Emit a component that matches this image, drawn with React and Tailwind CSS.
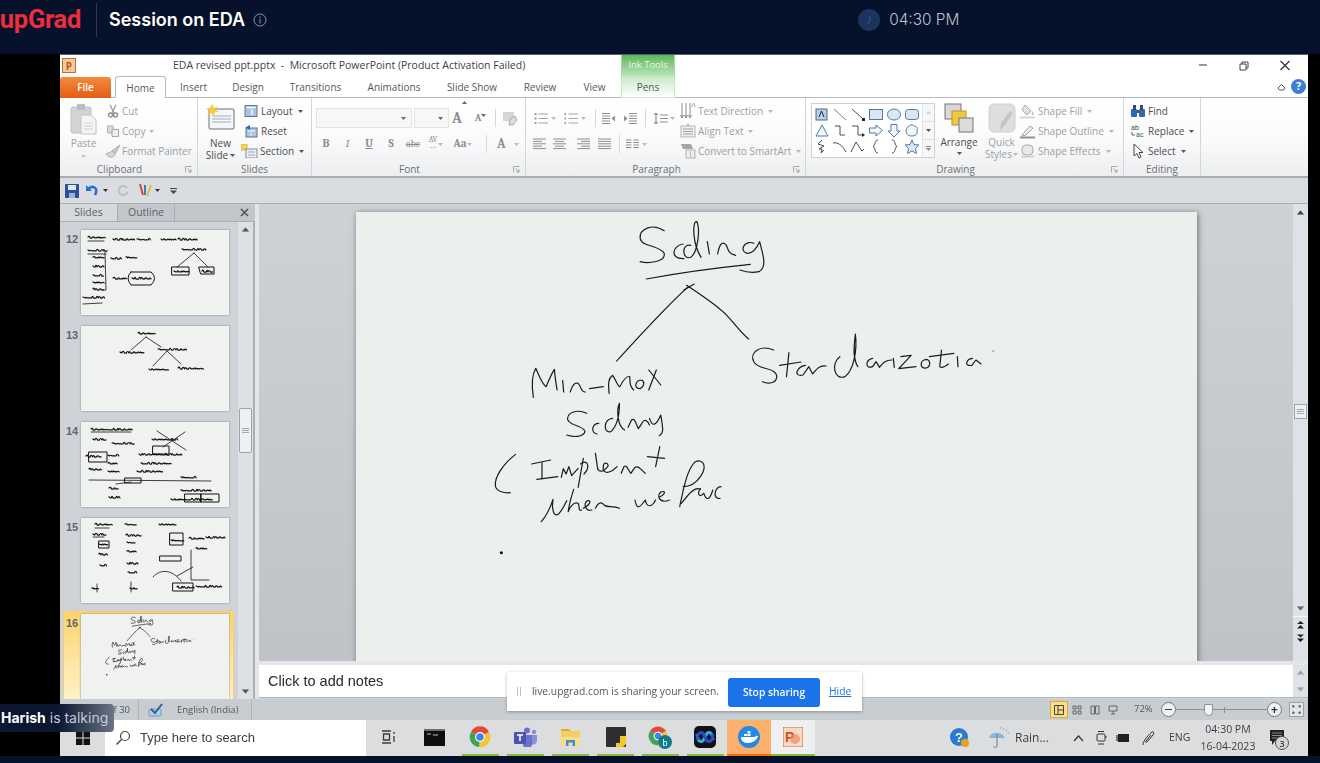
import React from 'react'

const ui = { fontFamily: '"Open Sans", "Liberation Sans", sans-serif' }

const inkStrokes = [
  // Scaling
  'M535 62 C500 38 462 58 465 85 C470 112 522 105 535 130 C540 155 490 162 465 155',
  'M590 102 C560 105 548 148 592 146',
  'M612 106 C582 100 588 152 612 142 C632 128 640 60 630 35 C616 30 616 100 642 142',
  'M660 95 L666 132',
  'M690 132 C695 105 702 92 714 104 C722 116 716 128 742 136',
  'M795 100 C770 88 750 122 775 130 C795 132 808 104 812 95 C820 130 836 170 810 185 C790 190 770 186 755 180',
  // underline and tree
  'M483 207 C570 190 700 172 785 163',
  'M605 230 C540 290 470 370 397 453',
  'M592 240 L622 222',
  'M600 226 C650 260 700 296 720 320 C745 348 760 370 780 387',
  // Standardization
  'M853 420 C810 402 782 430 795 455 C810 482 860 470 862 500 C860 522 835 522 820 515',
  'M897 428 L890 500',
  'M870 466 L932 456',
  'M945 466 C920 470 908 502 938 495 L955 470 L966 492 C975 480 985 465 1005 468',
  'M1045 440 C1018 460 1028 512 1060 500 C1085 480 1096 420 1090 372 C1084 420 1084 450 1097 470',
  'M1140 445 C1118 450 1118 478 1140 470 L1150 455 L1160 472 C1168 462 1175 450 1196 450',
  'M1200 445 L1203 472',
  'M1222 440 L1252 436 L1216 476 L1266 470',
  'M1296 448 C1276 450 1276 478 1296 474 C1310 468 1308 450 1296 448',
  'M1340 420 L1335 470 C1340 475 1350 470 1360 462',
  'M1305 440 L1376 430',
  'M1386 440 L1388 470',
  'M1430 445 C1410 448 1406 470 1428 466 L1440 450 L1455 462',
  // Min-Max
  'M155 562 C150 530 148 500 162 475 C172 500 182 525 192 530 C200 510 208 490 216 478 C218 500 220 520 224 540',
  'M240 512 L243 546',
  'M262 546 C268 526 275 516 285 520 C296 530 290 546 306 546',
  'M318 536 L358 530',
  'M375 550 C372 520 372 506 385 496 C395 510 400 530 406 530 C416 510 425 496 435 500 C435 520 436 530 446 540',
  'M470 510 C450 510 445 536 465 536 C478 528 478 516 470 510',
  'M490 480 L525 525',
  'M512 480 L490 540',
  // Scaling (second line)
  'M310 610 C280 595 250 610 255 630 C265 650 300 645 305 665 C300 682 270 682 252 675',
  'M345 640 C325 640 320 670 340 672',
  'M385 625 C360 625 355 670 380 665 C396 650 405 620 405 580 C395 600 400 650 420 660',
  'M430 652 L440 630 C450 620 455 650 460 656 L470 640 C480 620 490 640 492 645',
  'M492 625 C500 650 510 650 525 615 C530 650 536 670 520 677',
  // ( Implement
  'M103 733 C70 760 40 800 45 830 C50 845 70 850 88 848',
  'M150 762 L205 750',
  'M180 758 L180 806',
  'M165 808 L226 800',
  'M236 802 L242 776 L250 792 L258 770 L266 797 L285 775',
  'M300 745 L285 832',
  'M292 762 C312 745 322 770 302 792',
  'M335 730 L342 778 C350 790 365 780 372 768 C372 755 355 755 358 778 C362 795 385 785 398 770',
  'M410 790 L418 770 C425 762 430 780 438 790 L450 772 C460 765 468 780 480 790',
  'M522 710 L510 770',
  'M486 740 L536 745',
  // when we have
  'M178 935 C195 915 205 890 212 868 C208 890 212 925 228 912 C240 900 248 880 252 872',
  'M272 838 C265 860 258 890 256 905 C264 885 275 875 285 880 C290 890 285 905 295 900',
  'M300 895 C320 885 325 870 312 872 C300 880 305 905 325 900',
  'M335 895 C345 875 355 875 360 885 C370 895 385 885 405 895',
  'M450 870 C455 902 465 892 480 870 C485 896 500 890 510 870',
  'M520 862 C540 852 540 840 525 846 C510 860 525 882 550 870',
  'M580 890 C590 840 600 780 625 755 C650 745 660 770 640 800 C620 830 600 830 590 830',
  'M585 880 C600 860 622 828 640 838',
  'M640 836 C630 850 636 866 650 850 C656 870 666 875 676 840',
  'M700 830 C680 830 675 870 697 865'
]

const Ink = ({ width, height, stroke = 3.5 }) => (
  <svg width={width} height={height} viewBox="0 0 1568 1050" preserveAspectRatio="none" className="block shrink-0">
    <g fill="none" stroke="#1a1c1c" strokeWidth={stroke} strokeLinecap="round" strokeLinejoin="round">
      {inkStrokes.map((d, i) => <path key={i} d={d} />)}
    </g>
    <circle cx="62" cy="1028" r={stroke + 1} fill="#111" />
    <circle cx="1490" cy="423" r={stroke * 0.6} fill="#555" />
  </svg>
)

// handwriting seen at thumbnail size, a soft cursive loop
const wobble = [-1.3, 0.7, -0.5, 1, -1.7, 0.4, -0.9, 1.1, -0.3, 0.6, -1.5, 0.8, -0.6]
const steps = [2.2, 1.7, 2.8, 1.9, 2.4, 1.6, 2.5]
const scribble = (x, y, w, seed = 1) => {
  let d = `M${x} ${y}`
  for (let i = 0, px = x; px < x + w; i++) {
    const step = steps[(i + seed) % steps.length]
    const top = y + wobble[(i * 3 + seed) % wobble.length] * 1.3
    d += ` Q${(px + step * 0.5).toFixed(1)} ${top.toFixed(1)} ${(px + step).toFixed(1)} ${(y + 0.9).toFixed(1)}`
    px += step
  }
  return d
}

const thumbData = {
  12: {
    scribbles: [[7, 7, 16], [32, 9, 20], [56, 9, 12], [80, 9, 14], [97, 9, 18], [7, 20, 18], [12, 27, 10], [12, 36, 10], [12, 45, 10], [12, 52, 10], [12, 59, 10], [30, 28, 9], [45, 27, 10], [32, 48, 12], [51, 48, 19], [101, 19, 23], [93, 41, 14], [121, 41, 10], [2, 67, 20]],
    lines: ['M7 11 L23 11', 'M2 74 L21 73', 'M24 22 L25 60 L22 60', 'M113 23 L96 37', 'M113 23 L127 37', 'M7 24 L25 24'],
    shapes: ['M50 42 H70 Q77 48 70 55 H50 Q44 48 50 42 Z', 'M91 37 H108 V45 H91 Z', 'M118 37 H133 V44 H120 Z']
  },
  13: {
    scribbles: [[57, 7, 16], [39, 26, 22], [77, 23, 28], [68, 43, 18], [97, 42, 24]],
    lines: ['M65 11 L50 24', 'M65 11 L80 21', 'M86 25 L72 40', 'M86 25 L100 38']
  },
  14: {
    scribbles: [[10, 7, 40], [12, 17, 12], [31, 21, 20], [71, 17, 25], [5, 34, 15], [27, 33, 9], [27, 41, 9], [58, 32, 42], [60, 41, 30], [27, 49, 9], [8, 47, 12], [56, 49, 25], [100, 55, 14], [28, 66, 9], [28, 75, 9], [100, 68, 30], [90, 77, 40]],
    lines: ['M8 58 L130 59', 'M76 9 L105 28', 'M82 25 L104 10', 'M10 10 L50 10', 'M35 62 L50 60'],
    shapes: ['M8 30 H26 V40 H8 Z', 'M72 24 H88 V32 H72 Z', 'M104 72 H120 V80 H104 Z', 'M120 72 H138 V80 H120 Z', 'M44 56 H60 V61 H44 Z']
  },
  15: {
    scribbles: [[14, 6, 16], [12, 16, 12], [44, 6, 10], [78, 6, 16], [45, 17, 14], [46, 24, 8], [46, 33, 8], [46, 45, 9], [47, 54, 8], [18, 26, 8], [18, 36, 7], [19, 47, 5], [90, 22, 12], [108, 20, 14], [125, 19, 18], [11, 70, 6], [49, 70, 6], [96, 69, 16], [115, 68, 24], [115, 30, 10]],
    lines: ['M110 32 V62 L128 62', 'M72 59 C80 50 92 52 100 63', 'M14 10 H28', 'M12 19 H23', 'M96 58 L112 49', 'M16 74 V66', 'M50 74 V64'],
    shapes: ['M18 23 H28 V30 H18 Z', 'M89 15 H102 V27 H89 Z', 'M79 38 H100 V43 H79 Z', 'M92 65 H112 V73 H92 Z']
  }
}

const Thumb = ({ n }) => {
  const t = thumbData[n]
  return (
    <div className="w-[148px] h-[85px] bg-[#eff2ef] shrink-0 shadow-[0_0_2px_#7f8488] overflow-hidden">
      {n === 16 ? (
        <div className="ml-[22px]">
          <Ink width={95} height={62} stroke={11} />
        </div>
      ) : (
        <svg width="148" height="85" className="block blur-[0.3px]">
          <g fill="none" stroke="#111" strokeLinejoin="round" strokeLinecap="round">
            {t.scribbles.map(([x, y, w], i) => <path key={i} d={scribble(x, y, w, i)} strokeWidth="1.2" />)}
            {t.lines.map((d, i) => <path key={i} d={d} strokeWidth="0.8" />)}
            {(t.shapes || []).map((d, i) => <path key={i} d={d} strokeWidth="1" />)}
          </g>
        </svg>
      )}
    </div>
  )
}

const Caret = ({ className = 'text-[#9a9c9e]' }) => (
  <svg width="5" height="3" viewBox="0 0 5 3" className={`shrink-0 ${className}`}>
    <path d="M0 0H5L2.5 3Z" fill="currentColor" />
  </svg>
)

const Launcher = () => (
  <svg width="7" height="7" viewBox="0 0 7 7" className="shrink-0">
    <path d="M.5 6.5V.5H6.5" fill="none" stroke="#a9abad" />
    <path d="M2.5 2.5L6 6M6 3.5V6H3.5" fill="none" stroke="#9a9c9e" />
  </svg>
)

const Ico = ({ w = 14, h = 14, children, className = '' }) => (
  <svg width={w} height={h} viewBox={`0 0 ${w} ${h}`} className={`shrink-0 ${className}`} fill="none">
    {children}
  </svg>
)

const ribbonIcons = {
  cut: <Ico><path d="M4 1L8 9M10 1L6 9" stroke="#9b9b9b" strokeWidth="1.3" /><circle cx="4.5" cy="11" r="2" stroke="#8e8e8e" strokeWidth="1.3" /><circle cx="9.5" cy="11" r="2" stroke="#8e8e8e" strokeWidth="1.3" /></Ico>,
  copy: <Ico><path d="M1.5 2H7V9H1.5Z" fill="#dcdcdc" stroke="#b0b0b0" /><path d="M6 5.5H12.5V12.5H6Z" fill="#eee" stroke="#a8a8a8" /></Ico>,
  painter: <Ico w={16}><path d="M15 1L7 7L10 10Z" fill="#c8c8c8" stroke="#aaa" /><path d="M7 7C5 9 3 9 1 10C3 13 7 14 9 12C10 11 10 10 10 10Z" fill="#d8d8d8" stroke="#aaa" /></Ico>,
  layout: <Ico><rect x="1" y="1.5" width="12" height="11" fill="#a9c4de" stroke="#58799a" /><path d="M2.5 3.5H11.5M8 5.5V11" stroke="#fff" strokeWidth="1.4" /></Ico>,
  reset: <Ico><rect x="2" y="4" width="11" height="9" fill="#a9c4de" stroke="#58799a" /><path d="M4 7H11M7 9V12" stroke="#fff" /><path d="M6 1L1.5 3.5L6 6Z" fill="#1f6fbf" /></Ico>,
  section: <Ico w={18}><rect x="0" y="0" width="6" height="6" fill="#f4cf63" stroke="#e5b53a" /><rect x="5" y="5" width="11" height="9" fill="#eef1f5" stroke="#778da3" /><path d="M7 8H14M7 11H14" stroke="#8da6bf" /></Ico>,
  direction: <Ico w={16} h={18}><path d="M2 1V15M6 1V15M10 1V15" stroke="#8b8b8b" /><path d="M.5 13L2 16L3.5 13M4.5 13L6 16L7.500 13M8.500 13L10 16L11.500 13" stroke="#8b8b8b" /><path d="M11.500 5L13.500 1L15.500 5" stroke="#aaa" /></Ico>,
  align: <Ico w={16} h={16}><rect x="1" y="3" width="14" height="11" fill="#eee" stroke="#b5b5b5" /><path d="M3 6H13M3 8.500H13M3 11H13" stroke="#a5a5a5" /><path d="M8 .5V3" stroke="#888" /></Ico>,
  smart: <Ico w={16} h={16}><path d="M1 1H11L13 6H3Z" fill="#a5a5a5" /><rect x="6" y="7" width="9" height="8" fill="#eee" stroke="#b0b0b0" /><path d="M10.500 8V14" stroke="#bbb" /></Ico>,
  fill: <Ico w={16} h={16}><path d="M5 2L11 8L7 12L2 7Z" fill="#e1e1e1" stroke="#aaa" /><path d="M12 8C14 10 14 12 12.500 12C11.500 12 11.500 10 12 8Z" fill="#bbb" /><path d="M0 14.500H15" stroke="#d5d5d5" strokeWidth="2" /></Ico>,
  outline: <Ico w={16} h={16}><path d="M3 11L10 3L13 5L6 12L2 13Z" fill="#eee" stroke="#a0a0a0" /><path d="M0 14.500H15" stroke="#909090" strokeWidth="2" /></Ico>,
  effects: <Ico w={16} h={16}><rect x="2" y="2" width="11" height="10" rx="4" fill="#e8e8e8" stroke="#aaa" /><path d="M2 13.500H14" stroke="#d0d0d0" strokeWidth="2" /></Ico>,
  find: <Ico w={16} h={14}><rect x="1" y="5" width="6" height="8" rx="1" fill="#2d6cb5" /><rect x="9" y="5" width="6" height="8" rx="1" fill="#2d6cb5" /><rect x="3" y="1" width="3" height="5" fill="#3a4a60" /><rect x="10" y="1" width="3" height="5" fill="#3a4a60" /><path d="M7 6H9V9H7Z" fill="#555" /></Ico>,
  replace: <Ico w={16} h={14}><text x="1" y="6" fontSize="7" fill="#444" fontFamily="Liberation Sans">ab</text><text x="6" y="13" fontSize="7" fill="#2a6a2a" fontFamily="Liberation Sans">ac</text><path d="M2 8V11H5" stroke="#3070b0" /></Ico>,
  select: <Ico w={14} h={16}><path d="M3 1V13L6 10.500L8 15L10 14L8 9.500H12Z" fill="#fff" stroke="#444" /></Ico>
}

const SmallRow = ({ icon, label, caret, dark, gap = 'gap-[2px]', iconBox = 'w-[16px]' }) => (
  <div className={`h-[20px] shrink-0 flex items-center ${gap} text-[10px] ${dark ? 'text-[#4b4d50]' : 'text-[#9c9ea0]'}`}>
    <span className={`${iconBox} flex justify-center shrink-0`}>{ribbonIcons[icon]}</span>
    <span className="whitespace-nowrap">{label}</span>
    {caret && <span className="ml-[3px]"><Caret className={dark ? 'text-[#555]' : 'text-[#b4b6b8]'} /></span>}
  </div>
)

const Group = ({ width, label, launcher, children }) => (
  <div className={`${width} h-full flex flex-col border-r border-[#d4d7da] shrink-0`}>
    <div className="flex-1 flex min-h-0">{children}</div>
    <div className={`h-[15px] shrink-0 pt-[2px] flex items-center relative justify-center text-[10px] text-[#6d7073] ${launcher ? 'pr-[18px]' : ''}`}>
      {label}
      {launcher && <span className="absolute right-[5px] top-[5px]"><Launcher /></span>}
    </div>
  </div>
)

const FontBtn = ({ w, children, className = '' }) => (
  <div className={`${w} flex items-center justify-center shrink-0 text-[#8a8c8e] ${className}`}>{children}</div>
)

const VLine = ({ className = '' }) => <div className={`w-px h-[18px] bg-[#d6d8da] shrink-0 ${className}`} />

const ParaLines = ({ kind }) => {
  const lines = {
    left: [[0, 13], [0, 9], [0, 13], [0, 9], [0, 13]],
    center: [[0, 13], [2, 9], [0, 13], [2, 9], [0, 13]],
    right: [[0, 13], [4, 9], [0, 13], [4, 9], [0, 13]],
    just: [[0, 13], [0, 13], [0, 13], [0, 13], [0, 13]]
  }[kind]
  return (
    <Ico w={13} h={12}>
      {lines.map(([x, w], i) => <path key={i} d={`M${x} ${i * 2.4 + 1}h${w}`} stroke="#8e8e8e" />)}
    </Ico>
  )
}

const ListIcon = ({ numbered }) => (
  <Ico w={14} h={13}>
    {[2, 6.5, 11].map((y) => (
      <g key={y}>
        <rect x="0.500" y={y - 1} width={numbered ? 1.5 : 2} height="2" fill="#9a9a9a" />
        <path d={`M4.500 ${y}H14`} stroke="#a5a5a5" />
      </g>
    ))}
  </Ico>
)

const IndentIcon = ({ flip }) => (
  <Ico w={15} h={13}>
    <g transform={flip ? 'matrix(-1 0 0 1 15 0)' : undefined}>
      <path d="M6 1.500H14M6 4H14M6 6.500H14M6 9H14M6 11.500H14" stroke="#8f8f8f" />
      <path d="M4.500 6.500L1 3.500V9.500Z" fill="#8f8f8f" />
    </g>
  </Ico>
)

const shapeIcons = [
  <g><rect x="2" y="2" width="11" height="11" fill="#b8cfe4" stroke="#4b6a89" /><path d="M5 10L7.500 4L10 10" stroke="#223" /></g>,
  <path d="M2 2L14 13" stroke="#6d7d8d" />,
  <g><path d="M2 2L13 12" stroke="#3f4f5f" /><rect x="12" y="11" width="3" height="3" fill="#223" /></g>,
  <rect x="1.500" y="2.500" width="13" height="10" fill="#dbe7f3" stroke="#4f7aa5" />,
  <ellipse cx="8" cy="7.500" rx="6.500" ry="5.500" fill="#dbe7f3" stroke="#4f7aa5" />,
  <rect x="1.500" y="2.500" width="13" height="10" rx="3" fill="#dbe7f3" stroke="#4f7aa5" />,
  <path d="M8 2L14 13H2Z" fill="#f3f7fb" stroke="#4f7aa5" />,
  <path d="M3 3H8V12H13" stroke="#3f4f5f" />,
  <g><path d="M2 3H8V12H13" stroke="#3f4f5f" /><path d="M12 10L15 12L12 14Z" fill="#223" /></g>,
  <path d="M1.500 5H8V2L14.500 7.500L8 13V10H1.500Z" fill="#f3f7fb" stroke="#4f7aa5" />,
  <path d="M5 1.500H11V8H14L8 14L2 8H5Z" fill="#f3f7fb" stroke="#4f7aa5" />,
  <path d="M5 3C7 1 9 2 10 3C13 3 14 6 13 8C14 11 11 13 8 13C4 13 2 11 2 8C2 6 3 4 5 3Z" fill="#f3f7fb" stroke="#4f7aa5" />,
  <path d="M8 1L4 5L10 7L5 10L8 10L7 14L10 11" stroke="#3f4f5f" />,
  <path d="M1 4C6 3 10 6 14 13" stroke="#3f4f5f" />,
  <path d="M1 13L6 3L12 12L14 10" stroke="#3f4f5f" />,
  <path d="M10 1C6 1 8 6 5 7.500C8 9 6 14 10 14" stroke="#3f4f5f" />,
  <path d="M6 1C10 1 8 6 11 7.500C8 9 10 14 6 14" stroke="#3f4f5f" />,
  <path d="M8 1L10 5.500L15 6L11.500 9.500L12.500 14.500L8 12L3.500 14.500L4.500 9.500L1 6L6 5.500Z" fill="#dbe7f3" stroke="#4f7aa5" />
]

const Ribbon = () => (
  <div className="h-[80px] flex bg-linear-to-b from-white via-[#fbfbfc] to-[#eceef0] border-b-2 border-[#a8adb1]">
    <Group width="w-[138px]" label="Clipboard" launcher>
      <div className="w-[45px] flex flex-col items-center pt-[5px] pl-[2px] text-[10px] text-[#9c9ea0]">
        <svg width="27" height="32" viewBox="0 0 27 32" fill="none">
          <rect x="1" y="4" width="20" height="26" rx="2" fill="#d3d3d3" stroke="#c2c2c2" />
          <rect x="7" y="1" width="8" height="6" fill="#bdbdbd" />
          <path d="M11 12H21L26 17V31H11Z" fill="#f4f4f4" stroke="#c4c4c4" />
          <path d="M14 20H23M14 23H23M14 26H23" stroke="#d0d0d0" />
        </svg>
        <span className="mt-[1px]">Paste</span>
        <span className="mt-[4px]"><Caret className="text-[#c2c2c2]" /></span>
      </div>
      <div className="flex flex-col pt-[3px]">
        <SmallRow icon="cut" label="Cut" gap="gap-[1px]" />
        <SmallRow icon="copy" label="Copy" caret gap="gap-[1px]" />
        <SmallRow icon="painter" label="Format Painter" gap="gap-[1px]" />
      </div>
    </Group>
    <Group width="w-[114px]" label="Slides">
      <div className="w-[45px] flex flex-col items-center pt-[5px] text-[10px] leading-[12px] text-[#4b4d50]">
        <svg width="29" height="29" viewBox="0 0 29 29" fill="none">
          <rect x="3" y="6" width="25" height="20" rx="1" fill="#f4f6f9" stroke="#66717d" />
          <path d="M6 13H25M6 16H25M6 19H25" stroke="#bcc5cf" strokeWidth="1.500" />
          <path d="M6 1L8 5L12 3L9 7L13 9L8.500 9.500L8 13L5.500 10L1 12L3.500 8L0 5L4 5Z" fill="#f4c838" />
        </svg>
        <span className="mt-[5px]">New</span>
        <span className="flex items-center gap-[2px]">Slide <Caret className="text-[#555]" /></span>
      </div>
      <div className="flex flex-col pt-[3px]">
        <SmallRow icon="layout" label="Layout" caret dark />
        <SmallRow icon="reset" label="Reset" dark />
        <SmallRow icon="section" label="Section" caret dark iconBox="w-[16px] -ml-[1px]" />
      </div>
    </Group>
    <Group width="w-[214px]" label="Font" launcher>
      <div className="flex flex-col pl-[4px] pt-[10px]">
        <div className="flex items-center h-[20px]">
          <div className="w-[96px] h-[20px] bg-[#f6f7f8] border border-[#e2e4e6] flex items-center justify-end pr-[5px]"><Caret className="text-[#666]" /></div>
          <div className="ml-[2px] w-[35px] h-[20px] bg-[#f6f7f8] border border-[#e2e4e6] flex items-center justify-end pr-[5px]"><Caret className="text-[#666]" /></div>
          <FontBtn w="w-[21px]" className="font-bold text-[15px] font-serif items-start">A<span className="rotate-180 -mt-[6px]"><Caret className="text-[#666]" /></span></FontBtn>
          <FontBtn w="w-[21px]" className="font-bold text-[10px] font-serif">A<span className="-mt-[6px]"><Caret className="text-[#666]" /></span></FontBtn>
          <VLine className="ml-[4px]" />
          <FontBtn w="w-[28px]">
            <Ico w={16} h={15}><rect x="1" y="1" width="11" height="9" fill="#d5d5d5" /><path d="M8 8L13 5L15 9L11 14H7Z" fill="#ddd" stroke="#aaa" /></Ico>
          </FontBtn>
        </div>
        <div className="flex items-center h-[20px] mt-[6px] -ml-[1px] text-[10px] font-serif">
          <FontBtn w="w-[22px]" className="font-bold text-[11px]">B</FontBtn>
          <FontBtn w="w-[21px]" className="italic text-[11px]">I</FontBtn>
          <FontBtn w="w-[22px]" className="underline text-[11px] font-bold">U</FontBtn>
          <FontBtn w="w-[22px]" className="font-bold text-[11px]">S</FontBtn>
          <FontBtn w="w-[22px]" className="line-through">abc</FontBtn>
          <FontBtn w="w-[24px]" className="gap-[1px] leading-[8px] text-[8px]"><span className="flex flex-col items-center">AV<span className="text-[7px]">↔</span></span><Caret className="text-[#bbb]" /></FontBtn>
          <FontBtn w="w-[30px]" className="gap-[1px] text-[11px] font-bold">Aa<Caret className="text-[#bbb]" /></FontBtn>
          <VLine className="ml-[8px]" />
          <FontBtn w="w-[33px]" className="gap-[8px] text-[13px] font-bold justify-start! pl-[10px]">A<Caret className="text-[#bbb]" /></FontBtn>
        </div>
      </div>
    </Group>
    <Group width="w-[280px]" label="Paragraph" launcher>
      <div className="flex flex-col pl-[4px] pt-[10px] w-[149px] shrink-0">
        <div className="flex items-center h-[20px]">
          <FontBtn w="w-[30px]" className="gap-[3px]"><ListIcon /><Caret className="text-[#bbb]" /></FontBtn>
          <FontBtn w="w-[30px]" className="gap-[3px]"><ListIcon numbered /><Caret className="text-[#bbb]" /></FontBtn>
          <VLine className="ml-[5px]" />
          <FontBtn w="w-[24px]"><IndentIcon flip /></FontBtn>
          <FontBtn w="w-[20px]"><IndentIcon /></FontBtn>
          <VLine className="ml-[5px]" />
          <FontBtn w="w-[36px]" className="gap-[2px]">
            <Ico w={15} h={13}><path d="M3 1V12M1 3L3 1L5 3M1 10L3 12L5 10" stroke="#7b7b7b" /><path d="M7 3H15M7 6.500H15M7 10H15" stroke="#8f8f8f" /></Ico>
            <Caret className="text-[#bbb]" />
          </FontBtn>
        </div>
        <div className="flex items-center h-[20px] mt-[6px]">
          <FontBtn w="w-[19px]"><ParaLines kind="left" /></FontBtn>
          <FontBtn w="w-[21px]"><ParaLines kind="center" /></FontBtn>
          <FontBtn w="w-[26px]"><ParaLines kind="right" /></FontBtn>
          <FontBtn w="w-[17px]"><ParaLines kind="just" /></FontBtn>
          <VLine className="ml-[6px]" />
          <FontBtn w="w-[26px]" className="gap-[3px] ml-[3px]">
            <Ico w={13} h={12}><path d="M0 2H5.500M0 4.500H5.500M0 7H5.500M0 9.500H5.500M7.500 2H13M7.500 4.500H13M7.500 7H13M7.500 9.500H13" stroke="#8e8e8e" /></Ico>
            <Caret className="text-[#bbb]" />
          </FontBtn>
        </div>
      </div>
      <div className="flex flex-col pt-[3px] pl-[5px]">
        <SmallRow icon="direction" label="Text Direction" caret />
        <SmallRow icon="align" label="Align Text" caret />
        <SmallRow icon="smart" label="Convert to SmartArt" caret />
      </div>
    </Group>
    <Group width="w-[318px]" label="Drawing" launcher>
      <div className="ml-[5px] mt-[5px] w-[124px] h-[55px] border border-[#cfd2d5] bg-white flex shrink-0">
        <div className="w-[110px] grid grid-cols-6 place-items-center content-between py-[3px] px-[1px]">
          {shapeIcons.map((shape, i) => (
            <svg key={i} width="16" height="15" viewBox="0 0 16 15" fill="none">{shape}</svg>
          ))}
        </div>
        <div className="flex-1 flex flex-col border-l border-[#e2e4e6] bg-[#f6f7f8]">
          <div className="flex-1 flex items-center justify-center rotate-180"><Caret className="text-[#d0d0d0]" /></div>
          <div className="flex-1 flex items-center justify-center border-y border-[#dfe1e3]"><Caret className="text-[#555]" /></div>
          <div className="flex-1 flex flex-col gap-[1px] items-center justify-center"><span className="w-[5px] h-px bg-[#888]" /><Caret className="text-[#888]" /></div>
        </div>
      </div>
      <div className="w-[48px] flex flex-col items-center pt-[5px] text-[10px] leading-[12px] text-[#4b4d50] shrink-0">
        <svg width="30" height="30" viewBox="0 0 30 30" fill="none">
          <rect x="1" y="1" width="16" height="15" fill="#d9d9d9" stroke="#777" />
          <rect x="8" y="8" width="14" height="14" fill="#f2c93d" stroke="#b7932b" />
          <rect x="15" y="15" width="14" height="14" fill="#dcdcdc" stroke="#777" />
        </svg>
        <span className="mt-[3px]">Arrange</span>
        <span className="mt-[4px]"><Caret className="text-[#555]" /></span>
      </div>
      <div className="w-[37px] flex flex-col items-center pt-[5px] text-[10px] leading-[12px] text-[#9c9ea0] shrink-0">
        <svg width="28" height="30" viewBox="0 0 28 30" fill="none">
          <rect x="1" y="1" width="26" height="28" rx="5" fill="#dedede" stroke="#d0d0d0" />
          <path d="M25 10L17 22L12 27L13 20L22 8Z" fill="#c4c4c4" />
        </svg>
        <span className="mt-[3px]">Quick</span>
        <span className="flex items-center gap-[1px] whitespace-nowrap">Styles <Caret className="text-[#bbb]" /></span>
      </div>
      <div className="flex flex-col pt-[3px]">
        <SmallRow icon="fill" label="Shape Fill" caret />
        <SmallRow icon="outline" label="Shape Outline" caret />
        <SmallRow icon="effects" label="Shape Effects" caret />
      </div>
    </Group>
    <Group width="w-[77px]" label="Editing">
      <div className="flex flex-col pt-[3px] pl-[6px]">
        <SmallRow icon="find" label="Find" dark />
        <SmallRow icon="replace" label="Replace" caret dark />
        <SmallRow icon="select" label="Select" caret dark />
      </div>
    </Group>
    <div className="flex-1" />
  </div>
)

const TitleBar = () => (
  <div className="h-[22px] flex bg-white border-t border-[#5a5f63]">
    <div className="w-[561px] flex items-center">
      <div className="ml-[2px] w-[14px] h-[15px] bg-[#f5c9a0] border border-[#c9692d] flex items-center justify-center text-[10px] font-bold text-[#c4501b] leading-none">P</div>
      <span className="ml-[97px] text-[10.5px] text-[#3d3f42] whitespace-pre">EDA revised ppt.pptx  -  Microsoft PowerPoint (Product Activation Failed)</span>
    </div>
    <div className="w-[54px] bg-linear-to-b from-[#57b957] to-[#b9e4b9] flex items-center justify-center text-[9.5px] text-[#e8f6e8] border-x border-[#a6d8a6]">Ink Tools</div>
    <div className="flex-1 flex justify-end pr-[3px]">
      {[
        <path d="M3 6H11" stroke="#555" strokeWidth="1.2" />,
        <path d="M3 5H9V11H3ZM5 5V3H11V9H9" stroke="#444" />,
        <path d="M2.500 2L11.500 11M11.500 2L2.500 11" stroke="#333" strokeWidth="1.2" />
      ].map((p, i) => (
        <div key={i} className="w-[41px] flex items-center justify-center">
          <svg width="14" height="14" viewBox="0 0 14 14" fill="none">{p}</svg>
        </div>
      ))}
    </div>
  </div>
)

const tabs = [
  ['Insert', 'w-[55px]'],
  ['Design', 'w-[54px]'],
  ['Transitions', 'w-[81px]'],
  ['Animations', 'w-[76px]'],
  ['Slide Show', 'w-[80px]'],
  ['Review', 'w-[56px]'],
  ['View', 'w-[53px]']
]

const TabRow = () => (
  <div className="h-[22px] flex bg-white text-[10px] text-[#55585b]">
    <div className="w-[51px] mt-[1px] bg-linear-to-b from-[#f58a3c] to-[#e25c12] rounded-t-[3px] flex items-center justify-center text-white font-semibold">File</div>
    <div className="w-[4px] border-b border-[#b5bac0]" />
    <div className="w-[51px] h-[22px] pt-[2px] bg-white border border-b-0 border-[#b5bac0] rounded-t-[3px] flex items-center justify-center">Home</div>
    {tabs.map(([label, w]) => (
      <div key={label} className={`${w} pt-[2px] flex items-center justify-center border-b border-[#b5bac0]`}>{label}</div>
    ))}
    <div className="w-[54px] pt-[2px] bg-linear-to-b from-[#c4e8c4] to-white border-x border-b border-[#cfe5cf] flex items-center justify-center">Pens</div>
    <div className="flex-1 flex items-center justify-end gap-[5px] pr-[2px] border-b border-[#b5bac0]">
      <svg width="9" height="8" viewBox="0 0 9 8" fill="none"><path d="M1 5L4.500 1.500L8 5L6.500 7H2.500Z" stroke="#555" /></svg>
      <div className="w-[15px] h-[15px] rounded-full bg-[#3d7fd0] text-white text-[11px] font-bold flex items-center justify-center">?</div>
    </div>
  </div>
)

const Qat = () => (
  <div className="h-[26px] bg-[#d9dde1] flex items-center pl-[5px] border-b border-[#a8adb1]">
    <svg width="14" height="14" viewBox="0 0 14 14" className="shrink-0"><rect width="14" height="14" rx="1" fill="#2b4f9a" /><rect x="3" y="1" width="8" height="5" fill="#dfe7f3" /><rect x="4" y="9" width="6" height="5" fill="#9db3d6" /></svg>
    <svg width="14" height="13" viewBox="0 0 14 13" fill="none" className="ml-[7px] shrink-0"><path d="M2 5C6 1 13 3 9 11" stroke="#2a6fd0" strokeWidth="2.500" /><path d="M0 1V7H6Z" fill="#2a6fd0" /></svg>
    <span className="ml-[3px]"><Caret className="text-[#333]" /></span>
    <svg width="12" height="12" viewBox="0 0 12 12" fill="none" className="ml-[9px] shrink-0"><path d="M10 3A4.500 4.500 0 1 0 10.500 7" stroke="#bdbfc1" strokeWidth="2" /></svg>
    <svg width="15" height="15" viewBox="0 0 15 15" fill="none" className="ml-[9px] shrink-0"><path d="M2 1L5 12" stroke="#d04a3a" strokeWidth="2" /><path d="M7 2V12" stroke="#3f7fc0" strokeWidth="2" /><path d="M13 2L9 13" stroke="#e5b93a" strokeWidth="2" /></svg>
    <span className="ml-[2px]"><Caret className="text-[#333]" /></span>
    <svg width="7" height="6" viewBox="0 0 7 6" className="ml-[10px] shrink-0"><path d="M0 0H7V1H0ZM0 2.500H7L3.500 6Z" fill="#444" /></svg>
  </div>
)

const ScrollThumb = ({ className }) => (
  <div className={`border border-[#9ea2a6] bg-[#eef0f3] flex items-center justify-center ${className}`}>
    <div className="w-[7px] flex flex-col gap-[1px]">
      <span className="h-px bg-[#a5a8ab]" />
      <span className="h-px bg-[#a5a8ab]" />
      <span className="h-px bg-[#a5a8ab]" />
    </div>
  </div>
)

const SlidesPanel = () => (
  <div className="w-[195px] flex flex-col shrink-0">
    <div className="h-[18px] flex bg-[#c2c7cb] text-[10.5px] text-[#5e6266] border-b border-[#a9aeb2]">
      <div className="w-[57px] bg-[#d5d9dc] flex items-center justify-center">Slides</div>
      <div className="w-[58px] flex items-center justify-center border-x border-[#a9aeb2]">Outline</div>
      <div className="flex-1 flex items-center justify-end pr-[6px]">
        <svg width="9" height="9" viewBox="0 0 9 9"><path d="M1 1L8 8M8 1L1 8" stroke="#555" strokeWidth="1.600" /></svg>
      </div>
    </div>
    <div className="flex-1 flex min-h-0 bg-[#cfd3d7]">
      <div className="w-[178px] pt-[5px] flex flex-col gap-[5px] overflow-hidden">
        {[12, 13, 14, 15, 16].map((n) => (
          <div
            key={n}
            className={`ml-[3px] w-[171px] h-[91px] shrink-0 flex py-[2px] pl-[3px] text-[11px] font-bold text-[#5c6871] border ${n === 16 ? 'bg-linear-to-b from-[#fdd46a] to-[#fff2c8] border-[#f2cf7d]' : 'border-transparent'}`}
          >
            <span className="w-[15px] pt-[2px] leading-[14px] -ml-[1px]" style={{ fontFamily: '"Liberation Sans", sans-serif' }}>{n}</span>
            <Thumb n={n} />
          </div>
        ))}
      </div>
      <div className="w-[17px] bg-[#dde0e5] border-r-[2px] border-[#aab0b5] flex flex-col items-center pt-[6px]">
        <span className="rotate-180"><Caret className="text-[#555] scale-150" /></span>
        <ScrollThumb className="w-[13px] h-[45px] mt-[177px] rounded-[2px]" />
        <span className="mt-[237px]"><Caret className="text-[#555] scale-150" /></span>
      </div>
    </div>
  </div>
)

const SlideArea = () => (
  <div className="h-[457px] flex">
    <div className="w-[1034px] bg-linear-to-b from-[#ced2d6] to-[#bfc3c7] pt-[8px] pl-[97px] overflow-hidden">
      <div className="w-[841px] h-[460px] bg-[#ecf0ec] shadow-[1px_1px_6px_#666c70]">
        <div className="pl-[124px] -translate-y-[2px]">
          <Ink width={540} height={350} />
        </div>
      </div>
    </div>
    <div className="w-[15px] bg-[#dee1e7] flex flex-col items-center pt-[7px]">
      <span className="rotate-180"><Caret className="text-[#444] scale-150" /></span>
      <ScrollThumb className="w-[13px] h-[15px] mt-[190px]" />
      <span className="mt-[188px]"><Caret className="text-[#666] scale-150" /></span>
      <div className="mt-[6px] w-full border-t border-[#f4f5f7] flex flex-col items-center gap-[3px] pt-[4px]">
        <svg width="7" height="8" viewBox="0 0 7 8"><path d="M3.500 0L7 3H0ZM3.500 4L7 7.500H0Z" fill="#222" /></svg>
        <svg width="7" height="8" viewBox="0 0 7 8" className="mt-[2px]"><path d="M0 .5H7L3.500 3.500ZM0 4.500H7L3.500 8Z" fill="#222" /></svg>
      </div>
    </div>
  </div>
)

const Notes = () => (
  <div className="h-[33px] flex bg-white border-b border-[#b2b7bb]">
    <div className="flex-1 flex items-center pl-[9px] pt-[1px] text-[14.5px] text-[#26282a]" style={{ fontFamily: '"Liberation Sans", sans-serif' }}>Click to add notes</div>
    <div className="w-[15px] bg-[#dee1e7] flex flex-col items-center justify-between py-[6px]">
      <span className="rotate-180"><Caret className="text-[#9ea2a6] scale-150" /></span>
      <Caret className="text-[#9ea2a6] scale-150" />
    </div>
  </div>
)

const StatusBar = () => (
  <div className="h-[21px] bg-[#c8cdd2] flex items-center text-[9.500px] text-[#54585c]">
    <div className="w-[79px] pr-[8px] border-r border-[#aeb3b7] h-full flex items-center justify-end pt-[1px]">Slide 16 of 30</div>
    <div className="w-[33px] flex justify-center">
      <svg width="16" height="14" viewBox="0 0 16 14" fill="none"><rect x="1" y="6" width="12" height="7" rx="1" fill="#b8cce4" stroke="#7d98b8" /><path d="M3 6L7 10L14 1" stroke="#2a62a8" strokeWidth="2" /></svg>
    </div>
    <span className="ml-[5px] w-[74px] pt-[1px] whitespace-nowrap">English (India)</span>
    <div className="w-px h-full bg-[#aeb3b7]" />
    <div className="flex-1" />
    <div className="flex items-center h-full">
      <div className="w-[18px] h-[17px] bg-[#fbdc87] border border-[#d8a93e] flex items-center justify-center">
        <svg width="10" height="10" viewBox="0 0 10 10" fill="none"><path d="M.5.5H9.500V9.500H.5ZM4 .5V9.500M4 5H9.500" stroke="#444" /></svg>
      </div>
      {[
        <path d="M1 1H4V4H1ZM6 1H9V4H6ZM1 6H4V9H1ZM6 6H9V9H6Z" stroke="#666" />,
        <path d="M1 1H4.500V9H1ZM5.500 1H9V9H5.500Z" stroke="#666" />,
        <path d="M1 1H9V6H1ZM5 6V9M3 9H7" stroke="#666" />
      ].map((p, i) => (
        <div key={i} className="w-[18px] flex justify-center">
          <svg width="10" height="10" viewBox="0 0 10 10" fill="none">{p}</svg>
        </div>
      ))}
      <span className="ml-[12px] w-[24px]">72%</span>
      <div className="ml-[3px] w-[15px] h-[15px] rounded-full border border-[#777] bg-[#eef0f2] flex items-center justify-center"><span className="w-[7px] h-[1.500px] bg-[#444]" /></div>
      <div className="w-[91px] h-[11px] relative flex items-center">
        <div className="w-full h-px bg-[#8d9195]" />
        <div className="absolute left-[28px] top-0 w-[9px] h-[12px] bg-[#f3f4f5] border border-[#8d9195] rounded-b-[5px]" />
        <div className="absolute left-[48px] top-[3px] w-px h-[6px] bg-[#8d9195]" />
      </div>
      <div className="w-[15px] h-[15px] rounded-full border border-[#777] bg-[#eef0f2] flex items-center justify-center text-[12px] leading-none text-[#333] font-bold">+</div>
      <div className="ml-[7px] mr-[4px] w-[15px] h-[15px] bg-[#e3e6e9] border border-[#9ea2a6] flex items-center justify-center">
        <svg width="11" height="11" viewBox="0 0 11 11"><path d="M1 1L4 2L2 4ZM10 1L7 2L9 4ZM1 10L4 9L2 7ZM10 10L7 9L9 7Z" fill="#444" /></svg>
      </div>
    </div>
  </div>
)

const appIcons = [
  {
    width: 'w-[45px]',
    icon: <svg width="15" height="14" viewBox="0 0 15 14" fill="none"><path d="M1 1H10M1 13H10M2.500 4H8.500V10H2.500ZM13 2V4M13 6V12" stroke="#3b3b3b" strokeWidth="1.300" /></svg>
  },
  {
    width: 'w-[46px]',
    icon: <svg width="21" height="17" viewBox="0 0 21 17"><rect width="21" height="17" fill="#0e0e0e" /><rect width="21" height="2" fill="#6d6d6d" /><path d="M3 5H7M9 6H14" stroke="#bbb" /></svg>
  },
  {
    bar: 'w-[37px] bg-[#8cb83c]',
    width: 'w-[46px]',
    icon: (
      <svg width="22" height="22" viewBox="0 0 22 22">
        <path d="M11 11L2 6A10 10 0 0 1 20 6Z" fill="#e14a3c" />
        <path d="M11 11L20 6A10 10 0 0 1 10 21Z" fill="#f6c430" />
        <path d="M11 11L10 21A10 10 0 0 1 2 6Z" fill="#3da64f" />
        <circle cx="11" cy="11" r="5" fill="#fff" />
        <circle cx="11" cy="11" r="3.800" fill="#3f86ea" />
      </svg>
    )
  },
  {
    bar: 'w-[37px] bg-[#8cb83c]',
    width: 'w-[45px]',
    icon: (
      <svg width="23" height="20" viewBox="0 0 23 20">
        <circle cx="13" cy="3.500" r="3" fill="#6d72c8" />
        <circle cx="20" cy="5" r="2.300" fill="#8a8edb" />
        <path d="M15 8H23V14A4 4 0 0 1 17 17Z" fill="#8a8edb" />
        <path d="M7 8H18V16A4 4 0 0 1 9 18Z" fill="#6d72c8" />
        <rect y="5" width="12" height="12" rx="1" fill="#4b52b2" />
        <path d="M3 8H9M6 8V14" stroke="#fff" strokeWidth="1.600" />
      </svg>
    )
  },
  {
    bar: 'w-[37px] bg-[#8cb83c]',
    width: 'w-[45px]',
    icon: (
      <svg width="19" height="18" viewBox="0 0 19 18">
        <path d="M0 1H8L10 3H0Z" fill="#e2a92e" />
        <rect y="3" width="19" height="15" fill="#f6cd62" />
        <rect y="9" width="19" height="9" fill="#f9dd86" />
        <path d="M5 18V12H14V18H11.500V14.500H7.500V18Z" fill="#3f8fd0" />
      </svg>
    )
  },
  {
    bar: 'w-[37px] bg-[#8cb83c]',
    width: 'w-[45px]',
    icon: (
      <svg width="20" height="20" viewBox="0 0 20 20">
        <rect width="20" height="20" rx="1" fill="#2e2e2e" />
        <path d="M20 9V17L17 20H10V16L14 16L14 9Z" fill="#f4c927" />
      </svg>
    )
  },
  {
    bar: 'w-[37px] bg-[#8cb83c]',
    width: 'w-[45px]',
    icon: (
      <svg width="25" height="23" viewBox="0 0 25 23">
        <path d="M10 10L2 5A9.500 9.500 0 0 1 18 5Z" fill="#e14a3c" />
        <path d="M10 10L18 5A9.500 9.500 0 0 1 10 19.500Z" fill="#f6c430" />
        <path d="M10 10L10 19.500A9.500 9.500 0 0 1 2 5Z" fill="#3da64f" />
        <circle cx="10" cy="10" r="4" fill="#3f86ea" stroke="#fff" />
        <circle cx="17" cy="16" r="7" fill="#117a8b" />
        <text x="14.500" y="20" fontSize="9" fill="#fff" fontFamily="Liberation Sans">b</text>
      </svg>
    )
  },
  {
    bar: 'w-[37px] bg-[#8cb83c]',
    width: 'w-[44px]',
    icon: (
      <svg width="22" height="22" viewBox="0 0 22 22" fill="none">
        <rect width="22" height="22" rx="5" fill="#111" />
        <path d="M3 8C4 18 9 17 11 11C13 5 18 4 19 14" stroke="#3aa8e8" strokeWidth="3" />
        <path d="M3 14C4 4 9 5 11 11C13 17 18 18 19 8" stroke="#2350c8" strokeWidth="3" />
      </svg>
    )
  },
  {
    bar: 'w-full bg-[#ff6a00]',
    width: 'w-[44px]',
    bg: 'bg-[#fbb06b]',
    icon: (
      <svg width="22" height="22" viewBox="0 0 22 22">
        <circle cx="11" cy="11" r="11" fill="#2388e6" />
        <path d="M3 11H17C18 9 19 10 20 10C19 14 15 17 10 17C6 17 3 15 3 11Z" fill="#fff" />
        <path d="M6 8H9V10H6ZM9.500 8H12.500V10H9.500ZM9.500 5H12.500V7.500H9.500Z" fill="#fff" />
      </svg>
    )
  },
  {
    bar: 'w-full bg-[#8cb83c]',
    width: 'w-[44px]',
    bg: 'bg-[#eeeff0]',
    icon: (
      <svg width="20" height="20" viewBox="0 0 20 20">
        <rect width="20" height="20" fill="#f7d9c6" stroke="#c9692d" />
        <text x="2" y="15" fontSize="14" fontWeight="700" fill="#d2521e" fontFamily="Liberation Sans">P</text>
        <path d="M12 7A5 5 0 1 1 12 17A5 5 0 0 1 12 7Z" fill="#eb8a5e" opacity="0.700" />
      </svg>
    )
  }
]

const Taskbar = () => (
  <div className="h-[36px] flex bg-[#dcdddf] shrink-0">
    <div className="w-[45px] flex items-center justify-center">
      <svg width="14" height="14" viewBox="0 0 14 14"><path d="M0 0H6.500V6.500H0ZM7.500 0H14V6.500H7.500ZM0 7.500H6.500V14H0ZM7.500 7.500H14V14H7.500Z" fill="#111" /></svg>
    </div>
    <div className="w-[261px] bg-white flex items-center pl-[10px] text-[13px] text-[#3c3e40]" style={{ fontFamily: '"Liberation Sans", sans-serif' }}>
      <svg width="16" height="16" viewBox="0 0 16 16" fill="none"><circle cx="10" cy="6" r="4.500" stroke="#444" strokeWidth="1.200" /><path d="M6.500 9.500L1.500 14.500" stroke="#444" strokeWidth="1.400" /></svg>
      <span className="ml-[9px]">Type here to search</span>
    </div>
    {appIcons.map((app, i) => (
      <div key={i} className={`${app.width} h-full flex flex-col items-center shrink-0 ${app.bg || ''}`}>
        <div className="flex-1 flex items-center justify-center">{app.icon}</div>
        <div className={`h-[2px] ${app.bar || 'w-full'}`} />
      </div>
    ))}
    <div className="flex-1 flex items-center text-[#3c3e40]">
      <svg width="20" height="20" viewBox="0 0 20 20" className="ml-[135px] shrink-0">
        <circle cx="9" cy="9" r="9" fill="#2a7ad2" />
        <text x="5" y="14" fontSize="13" fontWeight="700" fill="#fff" fontFamily="Liberation Sans">?</text>
        <circle cx="15" cy="15" r="4" fill="#e8a020" />
      </svg>
      <svg width="22" height="24" viewBox="0 0 22 24" fill="none" className="ml-[18px] shrink-0">
        <path d="M1 12C3 5 14 5 17 12Z" fill="#86b8de" />
        <path d="M9 8V20C9 22 6 22 6 20" stroke="#777" />
        <path d="M16 2L15 4M19 3L18 5M21 6L20 8M13 1L12.500 3" stroke="#8db4d6" />
      </svg>
      <span className="ml-[5px] text-[12px] w-[36px] whitespace-nowrap">Rain...</span>
      <svg width="11" height="7" viewBox="0 0 11 7" fill="none" className="ml-[22px] shrink-0"><path d="M1 6L5.500 1L10 6" stroke="#333" strokeWidth="1.200" /></svg>
      <svg width="12" height="16" viewBox="0 0 12 16" fill="none" className="ml-[11px] shrink-0"><rect x="2" y="4" width="8" height="7" rx="1" stroke="#333" /><path d="M3 1.500H9M3 14H9M10 7H12" stroke="#333" /></svg>
      <svg width="14" height="12" viewBox="0 0 14 12" className="ml-[9px] shrink-0"><rect x="2" y="2" width="11" height="8" fill="#222" /><path d="M0 3H2V9H0Z" fill="#777" /></svg>
      <svg width="14" height="16" viewBox="0 0 14 16" fill="none" className="ml-[11px] shrink-0"><path d="M2 15C1 12 9 3 11 2C13 1 13 3 12 5L6 12C5 13 4 12 5 11L10 5" stroke="#333" /></svg>
      <span className="ml-[14px] text-[10.500px] w-[30px]">ENG</span>
      <div className="ml-[1px] w-[56px] flex flex-col items-center text-[10.500px] leading-[17px]">
        <span>04:30 PM</span>
        <span>16-04-2023</span>
      </div>
      <div className="ml-[14px] relative shrink-0">
        <svg width="14" height="16" viewBox="0 0 14 16"><path d="M0 0H14V11H5L2 15V11H0Z" fill="#222" /><path d="M2 3H12M2 5.500H12M2 8H9" stroke="#888" /></svg>
        <span className="absolute left-[5px] top-[6px] w-[14px] h-[14px] rounded-full border border-[#555] bg-[#d6d7d9] flex items-center justify-center text-[9px] font-semibold leading-none">3</span>
      </div>
    </div>
  </div>
)

const App = () => (
  <div className="relative w-[1320px] h-[763px] bg-black overflow-hidden" style={ui}>
    <header className="h-[54px] bg-[#06122b] flex items-start">
      <div className="h-[40px] flex items-center">
        <div className="w-[81px] flex justify-end">
          <span className="text-[25.5px] font-bold text-[#ee2c3c] leading-none tracking-[-0.3px] whitespace-nowrap" style={{ fontFamily: 'Roboto, sans-serif' }}>upGrad</span>
        </div>
        <div className="ml-[15px] w-px h-[34px] bg-[#2f3a52]" />
        <span className="ml-[12px] text-[18px] font-semibold text-white leading-none whitespace-nowrap" style={{ fontFamily: 'Inter, sans-serif' }}>Session on EDA</span>
        <svg width="14" height="14" viewBox="0 0 14 14" fill="none" className="ml-[8px]">
          <circle cx="7" cy="7" r="6" stroke="#8d96a6" />
          <path d="M7 6V10.500M7 3.500V5" stroke="#8d96a6" />
        </svg>
        <div className="ml-[591px] w-[22px] h-[22px] rounded-full bg-[#1d3460] flex items-center justify-center">
          <svg width="10" height="12" viewBox="0 0 10 12" fill="none"><path d="M6 2V7L3 10" stroke="#415a8a" /></svg>
        </div>
        <span className="ml-[9px] text-[15.4px] font-light text-[#bcc4d0] leading-none whitespace-nowrap" style={{ fontFamily: 'Inter, sans-serif' }}>04:30 PM</span>
      </div>
    </header>

    <div className="h-[702px] flex">
      <div className="w-[60px] shrink-0" />
      <div className="w-[1248px] flex flex-col overflow-hidden blur-[0.35px]">
        <TitleBar />
        <TabRow />
        <Ribbon />
        <Qat />
        <div className="h-[495px] flex bg-[#d4d7da]">
          <SlidesPanel />
          <div className="w-[4px] bg-[#e4e6e8] shrink-0" />
          <div className="flex-1 flex flex-col min-w-0">
            <SlideArea />
            <div className="h-[4px] bg-[#e4e6e8]" />
            <Notes />
          </div>
        </div>
        <StatusBar />
        <Taskbar />
      </div>
    </div>
    <div className="h-[7px] bg-[#06122b]" />

    {/* who is talking */}
    <div className="absolute left-0 top-[704px] w-[114px] h-[28px] rounded-r-[4px] bg-linear-to-r from-[#0b1730] from-50% to-[#6c7585] flex items-center pl-[1px] text-[14px] leading-none text-[#c4cad4] whitespace-nowrap" style={{ fontFamily: 'Inter, sans-serif' }}>
      <span className="font-bold text-white">Harish</span>
      <span className="ml-[4px]">is talking</span>
    </div>

    {/* browser's screen sharing bar */}
    <div className="absolute left-[507px] top-[672px] w-[355px] h-[39px] bg-white shadow-[0_1px_3px_rgba(0,0,0,0.3)] flex items-center text-[10.3px] text-[#555]">
      <span className="ml-[10px] w-[4px] h-[9px] border-x border-[#c0c0c0]" />
      <span className="ml-[11px] whitespace-nowrap">live.upgrad.com is sharing your screen.</span>
      <div className="absolute left-[221px] top-[6px] w-[92px] h-[29px] rounded-[3px] bg-[#1a73e8] flex items-center justify-center text-white font-semibold">Stop sharing</div>
      <span className="absolute left-[322px] top-[12px] text-[#1a73e8] underline">Hide</span>
    </div>
  </div>
)

export default App
